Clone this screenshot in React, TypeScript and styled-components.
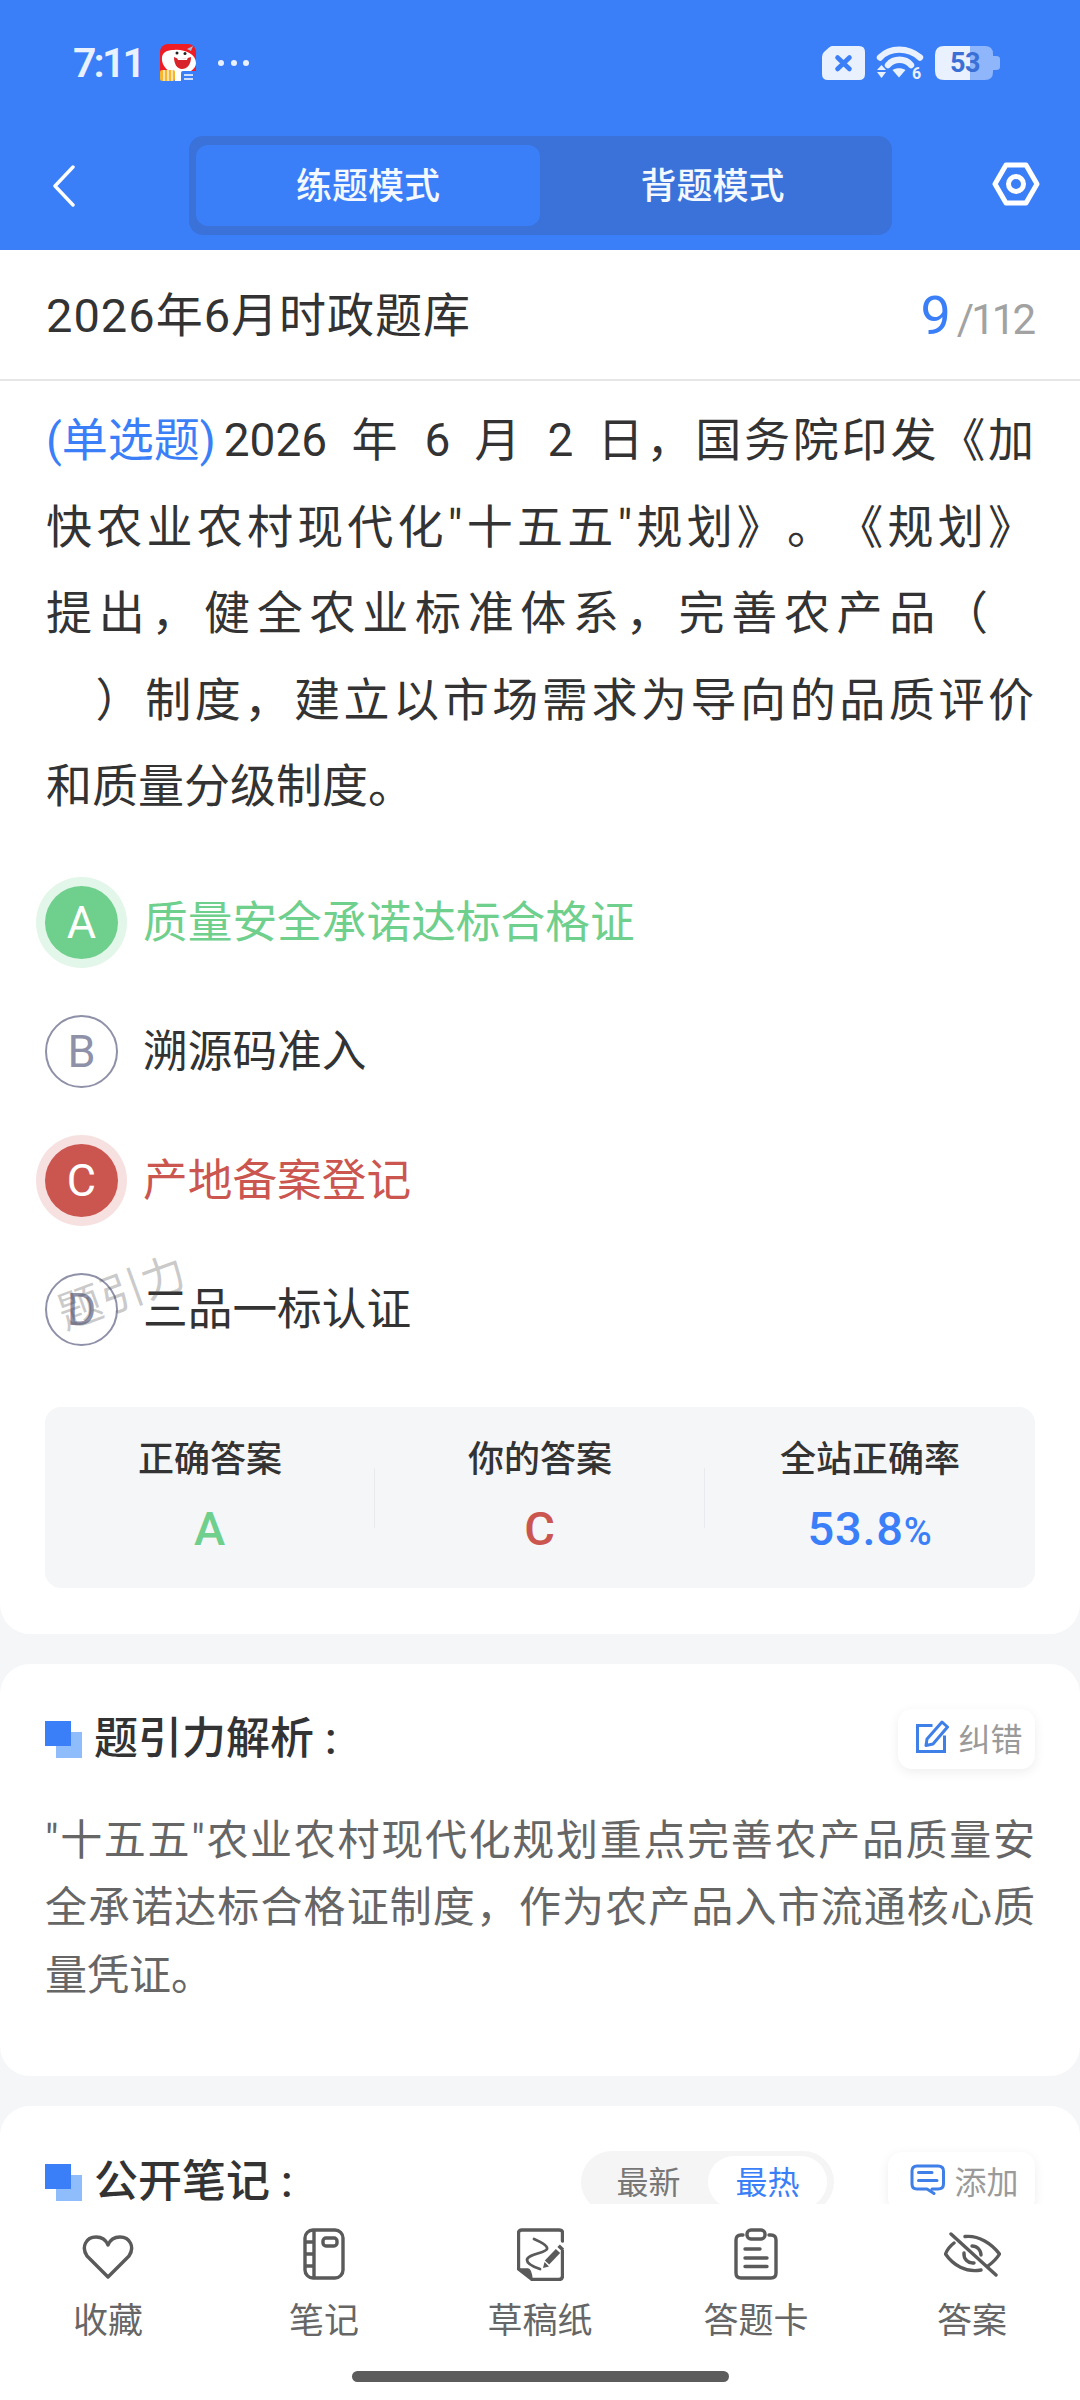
import React from "react";
import styled, { createGlobalStyle } from "styled-components";

const FONT = `Roboto, "Noto Sans CJK SC", sans-serif`;
const BLUE = "#3b7ff8";
const GREEN = "#6fcf8c";
const RED = "#cb5650";
const INK = "#333333";
const ICON = "#5a5a5a";

const Global = createGlobalStyle`
  html, body { margin: 0; padding: 0; background: #f5f6f8; }
  * { box-sizing: border-box; }
  body { font-family: ${FONT}; text-spacing-trim: space-all; }
`;

const Page = styled.div`
  width: 1080px;
  height: 2400px;
  display: flex;
  flex-direction: column;
  overflow: hidden;
  background: #f5f6f8;
`;

const Header = styled.header`
  height: 250px;
  flex: none;
  background: ${BLUE};
  display: flex;
  flex-direction: column;
`;

const StatusBar = styled.div`
  height: 126px;
  padding: 0 80px 0 73px;
  display: flex;
  align-items: center;
  justify-content: space-between;
`;

const StatusGroup = styled.div<{ $gap: number }>`
  display: flex;
  align-items: center;
  gap: ${(p) => p.$gap}px;
`;

const Clock = styled.span`
  font-size: 41px;
  line-height: 48px;
  font-weight: 600;
  letter-spacing: -2.8px;
  color: #e9f1fe;
  margin-right: 17px;
`;

const Dots = styled.div`
  display: flex;
  gap: 6.5px;
  margin-left: 21px;
  & > i {
    width: 6px;
    height: 6px;
    border-radius: 50%;
    background: #e9f1fe;
  }
`;

const Battery = styled.div`
  position: relative;
  width: 65px;
  height: 34px;
`;

const BatteryShape = styled.svg`
  display: block;
`;

const BatteryLabel = styled.span`
  position: absolute;
  left: 15px;
  top: 0;
  line-height: 34px;
  font-size: 27px;
  font-weight: 700;
  letter-spacing: -0.5px;
  color: #3a70d6;
`;

const Nav = styled.nav`
  margin-top: 10px;
  height: 99px;
  padding: 0 40px 0 52px;
  display: flex;
  align-items: center;
  justify-content: space-between;
`;

const Tabs = styled.div`
  width: 703px;
  height: 99px;
  margin-left: 13px;
  padding: 9px 7px;
  border-radius: 14px;
  background: #3a72da;
  display: grid;
  grid-template-columns: 344px 1fr;
`;

const Tab = styled.div<{ $active?: boolean }>`
  display: flex;
  align-items: center;
  justify-content: center;
  padding-bottom: 5px;
  border-radius: 12px;
  font-size: 36px;
  font-weight: 500;
  color: #f4f8ff;
  background: ${(p) => (p.$active ? BLUE : "transparent")};
`;

const Scroller = styled.main`
  flex: 1;
  min-height: 0;
`;

const MainCard = styled.section`
  background: #fff;
  border-radius: 0 0 30px 30px;
  padding-bottom: 46px;
`;

const TitleRow = styled.div`
  height: 131px;
  padding: 2px 46px 0;
  border-bottom: 2px solid #e6e6e6;
  display: flex;
  align-items: center;
  justify-content: space-between;
`;

const BankTitle = styled.h1`
  margin: 0;
  font-size: 47px;
  line-height: 60px;
  font-weight: 400;
  letter-spacing: 1px;
  color: ${INK};
`;

const Counter = styled.div`
  display: flex;
  align-items: baseline;
`;

const CounterNow = styled.span`
  font-size: 54px;
  color: ${BLUE};
  margin-right: 6px;
`;

const CounterAll = styled.span`
  font-size: 42px;
  letter-spacing: -3px;
  margin-right: 1px;
  color: #a2a2a2;
`;

const Question = styled.div`
  padding: 16px 46px 0;
  font-size: 46px;
  line-height: 86.5px;
  word-spacing: 10px;
  color: ${INK};
`;

const QuestionLine = styled.div<{ $last?: boolean; $tail?: boolean }>`
  padding-right: ${(p) => (p.$tail ? 46 : 0)}px;
  text-align: justify;
  text-align-last: ${(p) => (p.$last ? "left" : "justify")};
  white-space: nowrap;
`;

const QuestionKind = styled.span`
  display: inline-block;
  margin-right: 8px;
  color: ${BLUE};
`;

const Options = styled.div`
  margin-top: 28px;
  padding: 0 45px;
`;

const OptionRow = styled.div`
  position: relative;
  height: 129px;
  display: flex;
  align-items: center;
  gap: 25px;
`;

const tones = {
  right: { fill: GREEN, halo: "#e2f6e9", text: GREEN },
  wrong: { fill: RED, halo: "#f7e1e0", text: RED },
  idle: { fill: "#fff", halo: "transparent", text: INK },
};

type Tone = keyof typeof tones;

const Bullet = styled.span<{ $tone: Tone }>`
  width: 73px;
  height: 73px;
  flex: none;
  border-radius: 50%;
  display: flex;
  align-items: center;
  justify-content: center;
  font-size: 45px;
  font-weight: 400;
  background: ${(p) => tones[p.$tone].fill};
  color: ${(p) => (p.$tone === "idle" ? "#8e91a8" : "#fff")};
  border: ${(p) => (p.$tone === "idle" ? "2px solid #8e91a8" : "none")};
  box-shadow: 0 0 0 9px ${(p) => tones[p.$tone].halo};
`;

const OptionText = styled.span<{ $tone: Tone }>`
  padding-top: 1px;
  font-size: 44.7px;
  line-height: 60px;
  color: ${(p) => tones[p.$tone].text};
`;

const Watermark = styled.span`
  position: absolute;
  left: 11px;
  top: 22px;
  font-size: 44px;
  line-height: 52px;
  color: rgba(70, 70, 70, 0.28);
  transform: rotate(-20deg);
  pointer-events: none;
`;

const Stats = styled.div`
  margin: 33px 45px 0;
  height: 181px;
  border-radius: 16px;
  background: #f5f6f8;
  display: grid;
  grid-template-columns: repeat(3, 1fr);
`;

const Stat = styled.div<{ $divided?: boolean }>`
  position: relative;
  display: flex;
  flex-direction: column;
  align-items: center;
  padding-top: 29px;
  &::after {
    content: "";
    display: ${(p) => (p.$divided ? "block" : "none")};
    position: absolute;
    right: 0;
    top: 61px;
    height: 60px;
    width: 1px;
    background: #e9eaed;
  }
`;

const StatLabel = styled.span`
  font-size: 36px;
  line-height: 48px;
  font-weight: 500;
  color: ${INK};
`;

const StatValue = styled.span<{ $color: string }>`
  margin-top: 20px;
  font-size: 47px;
  line-height: 50px;
  font-weight: 500;
  letter-spacing: 0.8px;
  color: ${(p) => p.$color};
`;

const StatUnit = styled.span`
  font-size: 38px;
`;

const Card = styled.section<{ $height: number }>`
  margin-top: 30px;
  min-height: ${(p) => p.$height}px;
  background: #fff;
  border-radius: 30px;
  padding: 45px 45px 0;
`;

const CardHead = styled.div`
  display: flex;
  align-items: center;
`;

const HeadTitle = styled.h2`
  position: relative;
  margin: 0 auto 0 0;
  padding-left: 49px;
  font-size: 44px;
  line-height: 44px;
  font-weight: 500;
  color: ${INK};
  &::before {
    content: "";
    position: absolute;
    left: 11px;
    top: 15px;
    width: 26px;
    height: 26px;
    background: #8fbcfb;
  }
  &::after {
    content: "";
    position: absolute;
    left: 0;
    top: 4px;
    width: 26px;
    height: 25px;
    background: ${BLUE};
  }
`;

const ActionButton = styled.div<{ $width: number }>`
  width: ${(p) => p.$width}px;
  height: 60px;
  padding: 0 0 4px 6px;
  border-radius: 14px;
  background: #fff;
  box-shadow: 0 3px 12px rgba(0, 0, 0, 0.07);
  display: flex;
  align-items: center;
  justify-content: center;
  gap: 9px;
  font-size: 32px;
  color: #9a9a9a;
`;

const AnalysisText = styled.p`
  margin: 38px 0 0;
  font-size: 42px;
  line-height: 67.5px;
  color: #666;
  text-align: justify;
`;

const Toggle = styled.div`
  width: 253px;
  height: 62px;
  margin-right: 54px;
  padding: 5px 7px 5px 8px;
  border-radius: 31px;
  background: #f5f5f5;
  display: grid;
  grid-template-columns: 119px 119px;
`;

const ToggleItem = styled.span<{ $active?: boolean }>`
  display: flex;
  align-items: center;
  justify-content: center;
  padding-bottom: 4px;
  border-radius: 26px;
  font-size: 32px;
  color: ${(p) => (p.$active ? BLUE : "#777")};
  background: ${(p) => (p.$active ? "#fff" : "transparent")};
`;

const BottomBar = styled.footer`
  position: relative;
  z-index: 1;
  height: 196px;
  flex: none;
  background: #fff;
  display: flex;
  flex-direction: column;
`;

const BottomItems = styled.div`
  display: grid;
  grid-template-columns: repeat(5, 216px);
`;

const BottomItem = styled.div`
  display: flex;
  flex-direction: column;
  align-items: center;
  font-size: 35px;
  line-height: 46px;
  color: #666;
`;

const BottomIcon = styled.div`
  height: 95px;
  padding-top: 24px;
  display: flex;
  justify-content: center;
  color: ${ICON};
`;

const HomeBar = styled.div`
  width: 377px;
  height: 11px;
  margin: 26px auto 0;
  border-radius: 6px;
  background: #5c5c5c;
`;

const Line = { fill: "none", stroke: "currentColor", strokeLinecap: "round", strokeLinejoin: "round" } as const;

const AppBadge = () => (
  <svg width="37" height="39" viewBox="0 0 37 39">
    <rect x="0" y="0" width="36" height="36" rx="8" fill="#ee1c25" />
    <path d="M2 13 C3 7 9 6 14 6 C24 5 36 10 36 19 C36 25 29 30 20 30 C9 30 1 22 2 13Z" fill="#fff" />
    <path d="M14 13 C19 16 25 15 31 13 C31 21 27 25 22 25 C17 25 14 20 14 13Z" fill="#d8232a" />
    <path d="M17 13.5 C20 15 25 15 28 13.5 L27 16 H18Z" fill="#fff" />
    <circle cx="17" cy="9" r="1.5" fill="#222" />
    <circle cx="25" cy="9.5" r="1.5" fill="#222" />
    <path d="M27 5 L33 2 L31 7Z" fill="#a9bcd9" />
    <rect x="0" y="26" width="15" height="11" rx="2" fill="#f6b52c" />
    <path d="M4 26V37M8 26V37M12 26V37" stroke="#fff" strokeWidth="1.2" />
    <rect x="15" y="27" width="7" height="10" fill="#fff" />
    <rect x="21" y="27" width="16" height="12" rx="2" fill="#3b7ff8" />
    <path d="M24 31H33M24 35H33" stroke="#fff" strokeWidth="1.5" />
  </svg>
);

const CloseBadge = () => (
  <svg width="43" height="34" viewBox="0 0 43 34">
    <path d="M10 0 H37 Q43 0 43 6 V28 Q43 34 37 34 H6 Q0 34 0 28 V11 Q0 8 2 6 L7 1.5 Q8.5 0 10 0Z" fill="#eaf1fe" />
    <path d="M15.5 11.5 L27.5 23 M27.5 11.5 L15.5 23" stroke="#3b7ff8" strokeWidth="4.6" strokeLinecap="round" />
  </svg>
);

const WifiBadge = () => (
  <svg width="46" height="36" viewBox="0 0 46 36" overflow="visible">
    <path d="M3 12.5 C13 2 31 2 43 12.5" fill="none" stroke="#eaf1fe" strokeWidth="6.4" strokeLinecap="round" />
    <path d="M11 20 C17 13 28 13 34 20" fill="none" stroke="#eaf1fe" strokeWidth="6.4" strokeLinecap="round" />
    <path d="M15.5 25 C19 22.5 25 22.5 28.5 25 L22 32.5Z" fill="#eaf1fe" />
    <path d="M4.5 20 L9 25 H0Z M0 27 H9 L4.5 33Z" fill="#eaf1fe" />
    <text x="35" y="33.5" fontSize="16" fontWeight="700" fontFamily="Roboto, sans-serif" fill="#eaf1fe">6</text>
  </svg>
);

const BatteryBody = () => (
  <BatteryShape width="65" height="34" viewBox="0 0 65 34">
    <path d="M35 0 H50 Q58 0 58 8 V10 H61 Q65 10 65 13 V21 Q65 24 61 24 H58 V26 Q58 34 50 34 H35Z" fill="#8fb6fb" />
    <path d="M35 0 H9 Q0 0 0 9 V25 Q0 34 9 34 H35Z" fill="#eaf1fe" />
  </BatteryShape>
);

const BackIcon = () => (
  <svg width="24" height="42" viewBox="0 0 24 42" style={{ color: "#fff" }}>
    <path d="M21 2 L3 21 L21 40" {...Line} strokeWidth="3.4" />
  </svg>
);

const GearIcon = () => (
  <svg width="48" height="44" viewBox="0 0 48 44" style={{ color: "#fff", marginTop: -3 }}>
    <path d="M14 3 H34 L45 22 L34 41 H14 L3 22Z" {...Line} strokeWidth="5" />
    <circle cx="24" cy="22" r="7.5" {...Line} strokeWidth="5" />
  </svg>
);

const EditIcon = () => (
  <svg width="33" height="33" viewBox="0 0 33 33" style={{ color: "#3f7fe8" }}>
    <path d="M15 5.5 H1.5 V31.5 H28.5 V17" {...Line} strokeLinecap="square" strokeLinejoin="miter" strokeWidth="3" />
    <path d="M11 19 L26 2 L31.5 7 L17 24 L10 25.5Z" {...Line} strokeWidth="3" />
  </svg>
);

const NoteIcon = () => (
  <svg width="35" height="31" viewBox="0 0 35 31" style={{ color: "#3f7fe8" }}>
    <path d="M22 25 H28 Q33.5 25 33.5 20 V7 Q33.5 2 28 2 H7 Q2 2 2 7 V20 Q2 25 7 25 H17 L24 29.5" {...Line} strokeWidth="3" />
    <path d="M8.5 8.5 H22 M8.5 16.5 H27" {...Line} strokeWidth="3" />
  </svg>
);

const HeartIcon = () => (
  <svg width="52" height="46" viewBox="0 0 52 46" style={{ marginTop: 6 }}>
    <path d="M26 43 L5 22 C-1 13 4 3 14 3 C20 3 24 6 26 11 C28 6 32 3 38 3 C48 3 53 13 47 22Z" {...Line} strokeWidth="3.4" />
  </svg>
);

const BookIcon = () => (
  <svg width="42" height="52" viewBox="0 0 42 52">
    <rect x="2" y="2" width="38" height="48" rx="8" {...Line} strokeWidth="3.4" />
    <path d="M11 2 V50 M2 14 H11 M2 26 H11 M2 38 H11" {...Line} strokeLinecap="butt" strokeWidth="3.4" />
    <rect x="20" y="10" width="14" height="8" rx="3" {...Line} strokeWidth="3.4" />
  </svg>
);

const DraftIcon = () => (
  <svg width="47" height="53" viewBox="0 0 47 53">
    <path d="M15 51.5 H42 Q45.5 51.5 45.5 48 V23 M45.5 13 V5 Q45.5 2 42 2 H5 Q1.5 2 1.5 5 V41 L15 51.5" {...Line} strokeWidth="3.4" />
    <path d="M1.5 41 H11 Q14 41 15 51.5Z" fill="currentColor" stroke="currentColor" strokeWidth="1.5" strokeLinejoin="round" />
    <path d="M17 11 C24 14 31 18 30 21 C29 25 10 26 10 32 C10 36 17 39 23 41" {...Line} strokeWidth="2.8" />
    <path d="M30 34.5 L41 23" {...Line} strokeLinecap="butt" strokeWidth="6" />
    <path d="M42.5 21 L45 18.5" {...Line} strokeLinecap="butt" strokeWidth="6" />
    <path d="M26 40 L27.5 34 L32 38.5Z" fill="currentColor" />
  </svg>
);

const ClipIcon = () => (
  <svg width="44" height="52" viewBox="0 0 44 52">
    <path d="M9 7 H7 Q2 7 2 12 V45 Q2 50 7 50 H37 Q42 50 42 45 V12 Q42 7 37 7 H35" {...Line} strokeWidth="3.4" />
    <rect x="13" y="2" width="18" height="9" rx="4" {...Line} strokeWidth="3.4" />
    <path d="M11 21 H26 M11 30 H33 M11 38.5 H33" {...Line} strokeWidth="3.4" />
  </svg>
);

const EyeOffIcon = () => (
  <svg width="57" height="45" viewBox="0 0 57 45" style={{ marginTop: 4 }}>
    <path d="M21 4.5 C35 3 48 12 55.5 22 C52.5 27 48 31 44 34" {...Line} strokeWidth="3.4" />
    <path d="M10 11 C6 14 3 18 1.5 22 C9 33 22 41 37 38" {...Line} strokeWidth="3.4" />
    <path d="M20 21 A9 9 0 0 0 30 31 M28 14 A9 9 0 0 1 37 23" {...Line} strokeWidth="3.4" />
    <path d="M7 2 L52 43" {...Line} strokeWidth="3.4" />
  </svg>
);

const bottomItems = [
  { label: "收藏", icon: <HeartIcon /> },
  { label: "笔记", icon: <BookIcon /> },
  { label: "草稿纸", icon: <DraftIcon /> },
  { label: "答题卡", icon: <ClipIcon /> },
  { label: "答案", icon: <EyeOffIcon /> },
];

const options: { key: string; text: string; tone: Tone }[] = [
  { key: "A", text: "质量安全承诺达标合格证", tone: "right" },
  { key: "B", text: "溯源码准入", tone: "idle" },
  { key: "C", text: "产地备案登记", tone: "wrong" },
  { key: "D", text: "三品一标认证", tone: "idle" },
];

export default function App() {
  return (
    <Page>
      <Global />
      <Header>
        <StatusBar>
          <StatusGroup $gap={0}>
            <Clock>7:11</Clock>
            <AppBadge />
            <Dots>
              <i />
              <i />
              <i />
            </Dots>
          </StatusGroup>
          <StatusGroup $gap={12}>
            <CloseBadge />
            <WifiBadge />
            <Battery>
              <BatteryBody />
              <BatteryLabel>53</BatteryLabel>
            </Battery>
          </StatusGroup>
        </StatusBar>
        <Nav>
          <BackIcon />
          <Tabs>
            <Tab $active>练题模式</Tab>
            <Tab>背题模式</Tab>
          </Tabs>
          <GearIcon />
        </Nav>
      </Header>
      <Scroller>
        <MainCard>
          <TitleRow>
            <BankTitle>2026年6月时政题库</BankTitle>
            <Counter>
              <CounterNow>9</CounterNow>
              <CounterAll>/112</CounterAll>
            </Counter>
          </TitleRow>
          <Question>
            <QuestionLine>
              <QuestionKind>(单选题)</QuestionKind>2026 年 6 月 2 日，国务院印发《加
            </QuestionLine>
            <QuestionLine>快农业农村现代化"十五五"规划》。《规划》</QuestionLine>
            <QuestionLine $tail>提出，健全农业标准体系，完善农产品（</QuestionLine>
            <QuestionLine>{"\u3000"}）制度，建立以市场需求为导向的品质评价</QuestionLine>
            <QuestionLine $last>和质量分级制度。</QuestionLine>
          </Question>
          <Options>
            {options.map((o) => (
              <OptionRow key={o.key}>
                <Bullet $tone={o.tone}>{o.key}</Bullet>
                <OptionText $tone={o.tone}>{o.text}</OptionText>
                {o.key === "D" && <Watermark>题引力</Watermark>}
              </OptionRow>
            ))}
          </Options>
          <Stats>
            <Stat $divided>
              <StatLabel>正确答案</StatLabel>
              <StatValue $color={GREEN}>A</StatValue>
            </Stat>
            <Stat $divided>
              <StatLabel>你的答案</StatLabel>
              <StatValue $color={RED}>C</StatValue>
            </Stat>
            <Stat>
              <StatLabel>全站正确率</StatLabel>
              <StatValue $color={BLUE}>
                53.8<StatUnit>%</StatUnit>
              </StatValue>
            </Stat>
          </Stats>
        </MainCard>
        <Card $height={412}>
          <CardHead>
            <HeadTitle>题引力解析 :</HeadTitle>
            <ActionButton $width={137}>
              <EditIcon />
              纠错
            </ActionButton>
          </CardHead>
          <AnalysisText>
            "十五五"农业农村现代化规划重点完善农产品质量安全承诺达标合格证制度，作为农产品入市流通核心质量凭证。
          </AnalysisText>
        </Card>
        <Card $height={300}>
          <CardHead>
            <HeadTitle>公开笔记 :</HeadTitle>
            <Toggle>
              <ToggleItem>最新</ToggleItem>
              <ToggleItem $active>最热</ToggleItem>
            </Toggle>
            <ActionButton $width={147}>
              <NoteIcon />
              添加
            </ActionButton>
          </CardHead>
        </Card>
      </Scroller>
      <BottomBar>
        <BottomItems>
          {bottomItems.map((b) => (
            <BottomItem key={b.label}>
              <BottomIcon>{b.icon}</BottomIcon>
              {b.label}
            </BottomItem>
          ))}
        </BottomItems>
        <HomeBar />
      </BottomBar>
    </Page>
  );
}
